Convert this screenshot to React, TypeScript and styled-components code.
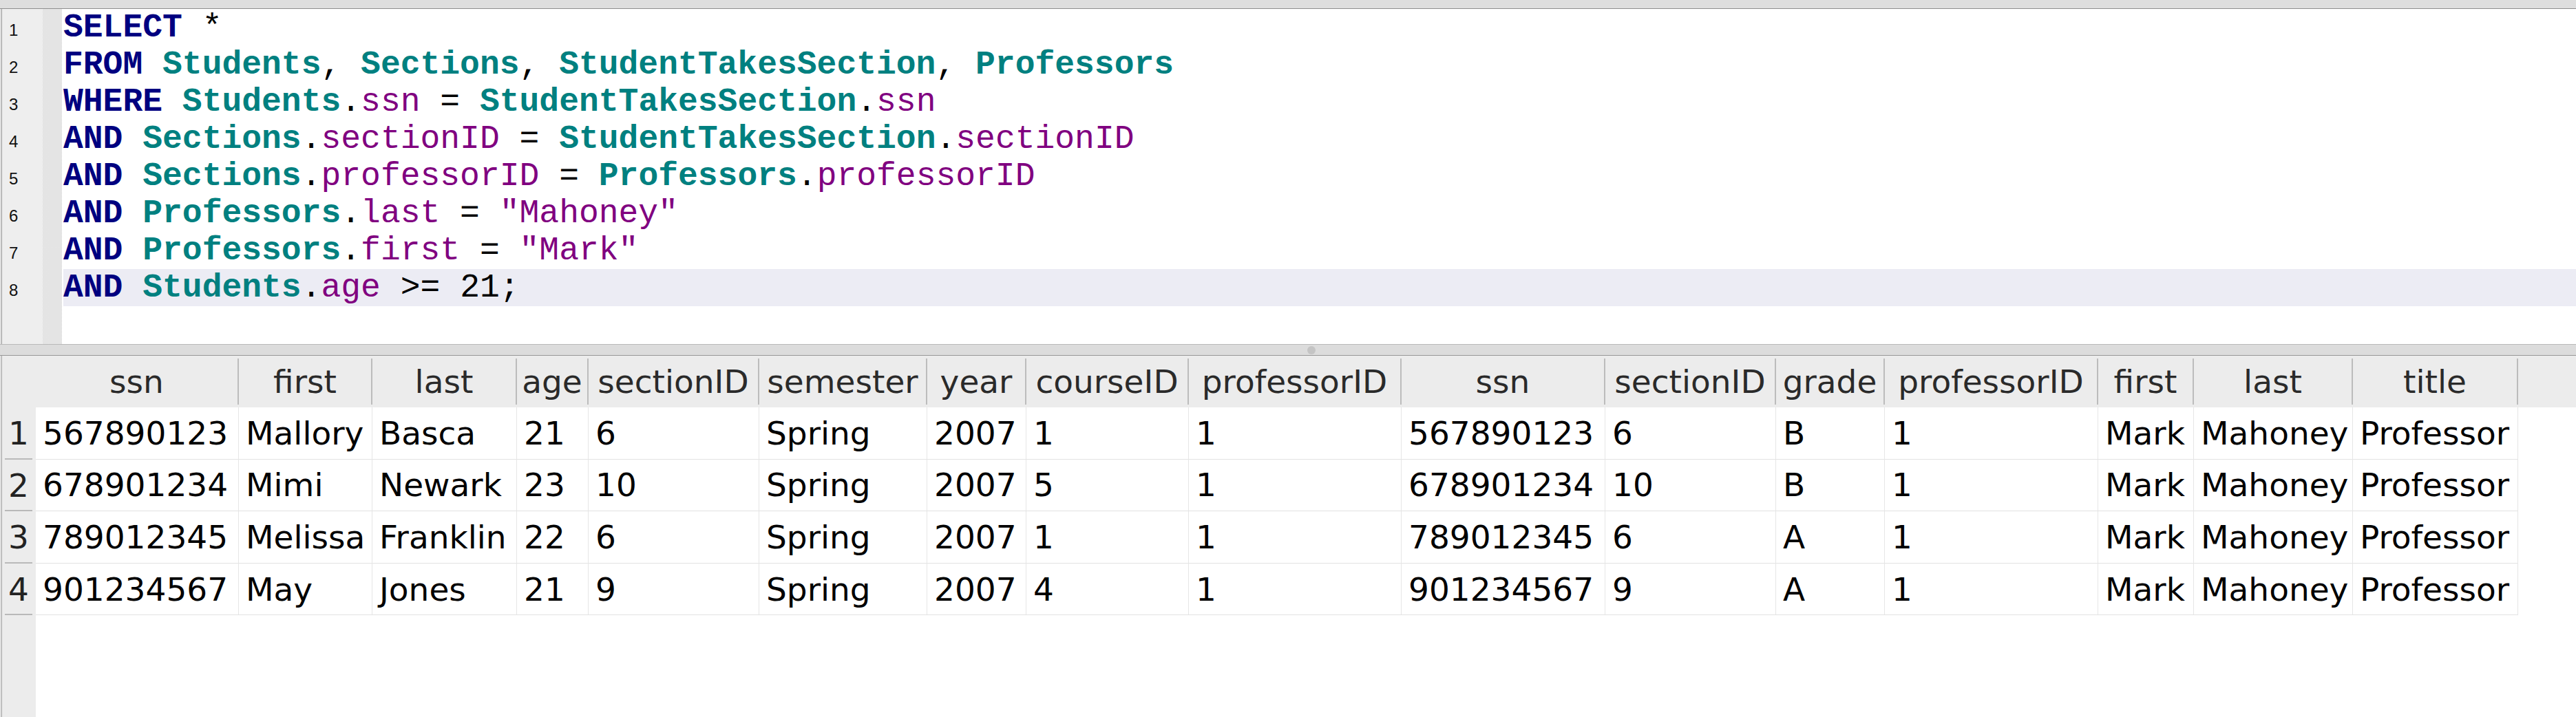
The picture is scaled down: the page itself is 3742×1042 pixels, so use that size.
import React from 'react';
import styled, { createGlobalStyle } from 'styled-components';

const GlobalStyle = createGlobalStyle`
  html, body {
    margin: 0;
    padding: 0;
    overflow: hidden;
    background: #dedede;
  }
`;

type Kind = 'kw' | 'tbl' | 'col' | 'str' | 'plain';

const code: [Kind, string][][] = [
  [['kw', 'SELECT'], ['plain', ' *']],
  [
    ['kw', 'FROM'], ['plain', ' '], ['tbl', 'Students'], ['plain', ', '], ['tbl', 'Sections'],
    ['plain', ', '], ['tbl', 'StudentTakesSection'], ['plain', ', '], ['tbl', 'Professors'],
  ],
  [
    ['kw', 'WHERE'], ['plain', ' '], ['tbl', 'Students'], ['plain', '.'], ['col', 'ssn'],
    ['plain', ' = '], ['tbl', 'StudentTakesSection'], ['plain', '.'], ['col', 'ssn'],
  ],
  [
    ['kw', 'AND'], ['plain', ' '], ['tbl', 'Sections'], ['plain', '.'], ['col', 'sectionID'],
    ['plain', ' = '], ['tbl', 'StudentTakesSection'], ['plain', '.'], ['col', 'sectionID'],
  ],
  [
    ['kw', 'AND'], ['plain', ' '], ['tbl', 'Sections'], ['plain', '.'], ['col', 'professorID'],
    ['plain', ' = '], ['tbl', 'Professors'], ['plain', '.'], ['col', 'professorID'],
  ],
  [['kw', 'AND'], ['plain', ' '], ['tbl', 'Professors'], ['plain', '.'], ['col', 'last'], ['plain', ' = '], ['str', '"Mahoney"']],
  [['kw', 'AND'], ['plain', ' '], ['tbl', 'Professors'], ['plain', '.'], ['col', 'first'], ['plain', ' = '], ['str', '"Mark"']],
  [['kw', 'AND'], ['plain', ' '], ['tbl', 'Students'], ['plain', '.'], ['col', 'age'], ['plain', ' >= 21;']],
];

const columns: { name: string; width: number }[] = [
  { name: 'ssn', width: 295 },
  { name: 'first', width: 194 },
  { name: 'last', width: 210 },
  { name: 'age', width: 104 },
  { name: 'sectionID', width: 248 },
  { name: 'semester', width: 244 },
  { name: 'year', width: 144 },
  { name: 'courseID', width: 236 },
  { name: 'professorID', width: 309 },
  { name: 'ssn', width: 296 },
  { name: 'sectionID', width: 248 },
  { name: 'grade', width: 158 },
  { name: 'professorID', width: 310 },
  { name: 'first', width: 139 },
  { name: 'last', width: 231 },
  { name: 'title', width: 240 },
];

const rows: string[][] = [
  ['567890123', 'Mallory', 'Basca', '21', '6', 'Spring', '2007', '1', '1', '567890123', '6', 'B', '1', 'Mark', 'Mahoney', 'Professor'],
  ['678901234', 'Mimi', 'Newark', '23', '10', 'Spring', '2007', '5', '1', '678901234', '10', 'B', '1', 'Mark', 'Mahoney', 'Professor'],
  ['789012345', 'Melissa', 'Franklin', '22', '6', 'Spring', '2007', '1', '1', '789012345', '6', 'A', '1', 'Mark', 'Mahoney', 'Professor'],
  ['901234567', 'May', 'Jones', '21', '9', 'Spring', '2007', '4', '1', '901234567', '9', 'A', '1', 'Mark', 'Mahoney', 'Professor'],
];

const gridTemplate = `49px ${columns.map((c) => `${c.width}px`).join(' ')} 1fr`;

const Window = styled.div`
  width: 100vw;
  height: 100vh;
  display: flex;
  flex-direction: column;
  background: #dedede;
`;

const TopBar = styled.div`
  height: 12px;
  flex-shrink: 0;
  border-bottom: 1px solid #8e8e8e;
  background: #dedede;
`;

const Editor = styled.div`
  height: 487px;
  flex-shrink: 0;
  margin-left: 2px;
  border-left: 1px solid #a0a0a0;
  display: flex;
  background: #ffffff;
`;

const Gutter = styled.div`
  width: 59px;
  flex-shrink: 0;
  padding-top: 4px;
  box-sizing: border-box;
  background: #eeeeee;
`;

const LineNumber = styled.div`
  height: 54px;
  line-height: 54px;
  padding-left: 10px;
  font-family: 'Liberation Sans', Arial, sans-serif;
  font-size: 24px;
  color: #111;
`;

const Dots = styled.div`
  width: 28px;
  flex-shrink: 0;
  background: repeating-conic-gradient(#d2d2d2 0 25%, #f6f6f6 0 50%) 0 0 / 2px 2px;
`;

const CodeArea = styled.div`
  flex: 1;
  padding-left: 2px;
`;

const CodeLine = styled.div<{ $current?: boolean }>`
  height: 54px;
  line-height: 54px;
  white-space: pre;
  font-family: 'Liberation Mono', 'Courier New', monospace;
  font-size: 48px;
  color: #000;
  background: ${(p) => (p.$current ? '#ececf4' : 'transparent')};
`;

const tokenColor: Record<Kind, string> = {
  kw: '#000080',
  tbl: '#008080',
  col: '#800080',
  str: '#800080',
  plain: '#000000',
};

const Tok = styled.span<{ $kind: Kind }>`
  color: ${(p) => tokenColor[p.$kind]};
  font-weight: ${(p) => (p.$kind === 'kw' || p.$kind === 'tbl' ? 700 : 400)};
`;

const Splitter = styled.div`
  height: 15px;
  flex-shrink: 0;
  border-top: 1px solid #b9b9b9;
  border-bottom: 1px solid #979797;
  background: #dcdcdc;
  display: flex;
  align-items: center;
`;

const Grip = styled.div`
  width: 12px;
  height: 12px;
  border-radius: 50%;
  background: #c4c4c4;
  margin-left: 1899px;
`;

const ResultPane = styled.div`
  flex: 1;
  margin-left: 2px;
  border-left: 1px solid #a8a8a8;
  display: flex;
  flex-direction: column;
  font-family: 'DejaVu Sans', Verdana, sans-serif;
  font-size: 47px;
  background: linear-gradient(to right, #ececec 0 49px, #ffffff 49px);
`;

const HeaderRow = styled.div`
  height: 75px;
  flex-shrink: 0;
  padding: 4px 0 4px;
  box-sizing: border-box;
  display: grid;
  grid-template-columns: ${gridTemplate};
  background: #ececec;
`;

const HeaderCell = styled.div<{ $sep?: boolean }>`
  display: flex;
  align-items: center;
  justify-content: center;
  color: #2a2a2a;
  white-space: nowrap;
  overflow: hidden;
  border-right: ${(p) => (p.$sep ? '2px solid #bcbcbc' : 'none')};
  box-sizing: border-box;
`;

const DataRow = styled.div`
  height: 75.6px;
  display: grid;
  grid-template-columns: ${gridTemplate};
`;

const RowNumber = styled.div`
  display: flex;
  align-items: center;
  padding-left: 9px;
  color: #222;
  background: linear-gradient(#b9b9b9, #b9b9b9) no-repeat 4px 100% / 40px 2px, #ececec;
`;

const Cell = styled.div`
  display: flex;
  align-items: center;
  padding-left: 10px;
  box-sizing: border-box;
  color: #000;
  white-space: nowrap;
  overflow: hidden;
  background: #ffffff;
  border-right: 1px solid #e6e6e6;
  border-bottom: 1px solid #e2e2e2;
`;

const Filler = styled.div`
  background: #ffffff;
`;

export default function App() {
  return (
    <Window>
      <GlobalStyle />
      <TopBar />
      <Editor>
        <Gutter>
          {code.map((_, i) => (
            <LineNumber key={i}>{i + 1}</LineNumber>
          ))}
        </Gutter>
        <Dots />
        <CodeArea>
          {code.map((line, i) => (
            <CodeLine key={i} $current={i === code.length - 1}>
              {line.map(([kind, text], j) => (
                <Tok key={j} $kind={kind}>
                  {text}
                </Tok>
              ))}
            </CodeLine>
          ))}
        </CodeArea>
      </Editor>
      <Splitter>
        <Grip />
      </Splitter>
      <ResultPane>
        <HeaderRow>
          <HeaderCell />
          {columns.map((c, i) => (
            <HeaderCell key={i} $sep>
              {c.name}
            </HeaderCell>
          ))}
          <HeaderCell />
        </HeaderRow>
        {rows.map((r, i) => (
          <DataRow key={i}>
            <RowNumber>{i + 1}</RowNumber>
            {r.map((v, j) => (
              <Cell key={j}>{v}</Cell>
            ))}
            <Filler />
          </DataRow>
        ))}
      </ResultPane>
    </Window>
  );
}
